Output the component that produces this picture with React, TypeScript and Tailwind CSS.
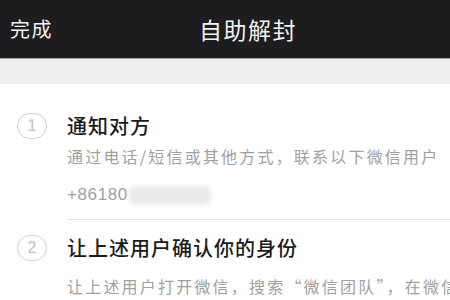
import React from "react";

const cjk = "font-['Noto_Sans_CJK_SC','Noto_Sans',sans-serif]";

interface IStepProps {
  num: string;
  title: string;
  desc: string;
  descGap: string;
  children?: React.ReactNode;
  divider?: boolean;
}

const Step: React.FC<IStepProps> = ({ num, title, desc, descGap, children, divider }): JSX.Element => {
  return (
    <div className="flex">
      <div className="w-[67px] shrink-0 pl-[17px]">
        <div className="mt-[1px] w-[30px] h-[26px] rounded-full border border-[#cfcfcf] flex items-center justify-center text-[16px] leading-none text-[#c2c2c2] font-['Liberation_Sans',sans-serif]">
          {num}
        </div>
      </div>
      <div className={`flex-1 min-w-0 ${divider ? "border-b border-[#e6e6e6] pb-[12px]" : ""}`}>
        <div className={`${cjk} text-[20px] leading-[28px] tracking-[1px] font-medium text-[#1b1b1b] whitespace-nowrap`}>
          {title}
        </div>
        <div
          className={`${cjk} ${descGap} text-[16px] leading-[24px] tracking-[2.2px] text-[#a0a0a0] whitespace-nowrap overflow-hidden`}
        >
          {desc}
        </div>
        {children}
      </div>
    </div>
  );
};

const App: React.FC = (): JSX.Element => {
  return (
    <div className="w-[450px] h-[300px] overflow-hidden bg-white">
      {/* nav bar */}
      <div className={`${cjk} h-[58px] bg-[#1d1c1e] flex items-center pl-[10px] text-[#f2f2f2]`}>
        <span className="w-[189px] text-[20px] tracking-[1.5px]">完成</span>
        <span className="text-[23px] tracking-[1.5px]">自助解封</span>
      </div>
      <div className="h-[26px] bg-[#efeef0] border-t border-[#a8a8aa]" />

      <div className="pt-[28px]">
        <Step
          num="1"
          title="通知对方"
          desc="通过电话/短信或其他方式，联系以下微信用户"
          descGap="mt-[4px]"
          divider
        >
          <div className="mt-[15px] flex items-center h-[24px]">
            <span className="font-['Liberation_Sans',sans-serif] text-[17px] tracking-[0.6px] text-[#a0a0a0]">
              +86180
            </span>
            <span className="ml-[1px] w-[82px] h-[19px] rounded-[6px] bg-[#ebebeb] blur-[2px]" />
          </div>
        </Step>

        <div className="pt-[14px]">
          <Step
            num="2"
            title="让上述用户确认你的身份"
            desc="让上述用户打开微信，搜索“微信团队”，在微信"
            descGap="mt-[12px]"
          />
        </div>
      </div>
    </div>
  );
};

export default App;
